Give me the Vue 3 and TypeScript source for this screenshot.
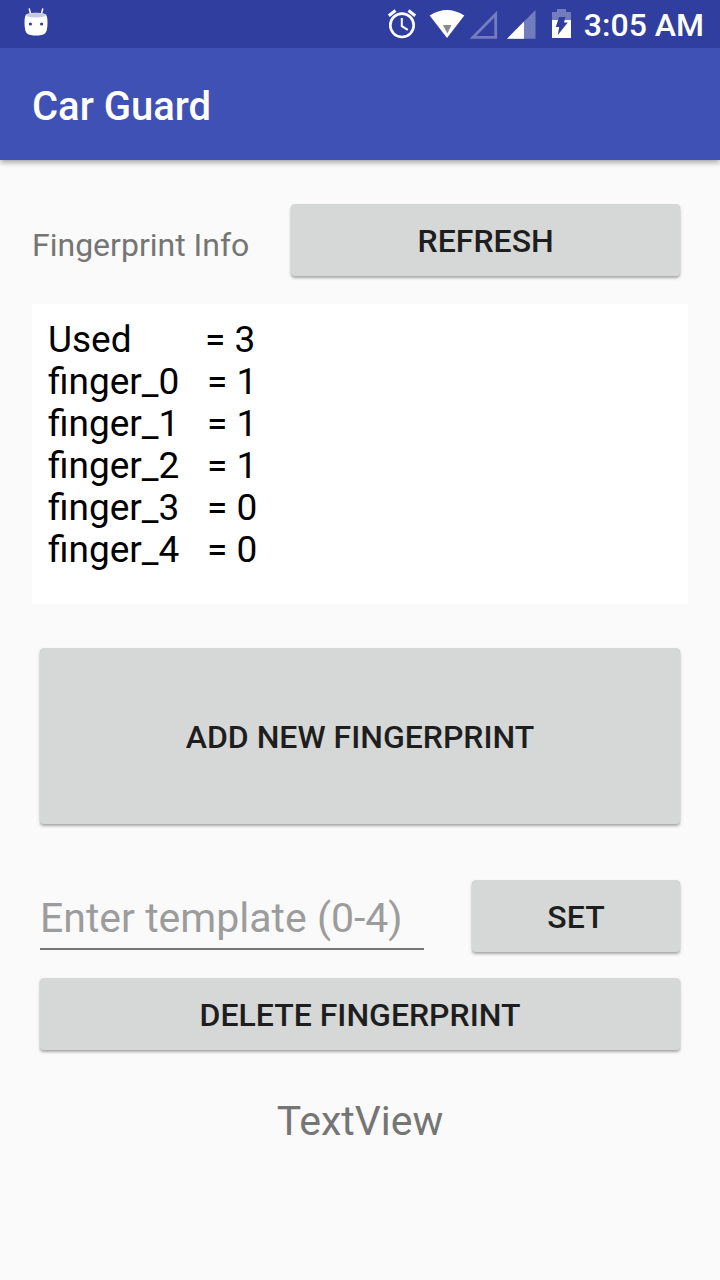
<script setup lang="ts">
import { computed, ref } from 'vue'

const used = ref(3)
const fingers = ref<number[]>([1, 1, 1, 0, 0])
const template = ref('')
const info = computed(() =>
  [`Used        = ${used.value}`, ...fingers.value.map((v, i) => `finger_${i}   = ${v}`)].join('\n'),
)
</script>

<template>
  <div class="screen">
    <div class="status">
      <svg class="robot" width="24" height="28" viewBox="0 0 24 28" aria-hidden="true">
        <path d="M5.300 1 6.600 6M18.700 1 17.400 6" fill="none" stroke="#fff" stroke-width="1.500" stroke-linecap="round" />
        <path d="M3 6Q12 3.500 21 6 23.500 6.500 23.500 14.500 23.500 23 21 25.500 18 27.500 12 27.500 6 27.500 3 25.500.5 23 .5 14.500.5 6.500 3 6Z" fill="#fff" />
        <path d="M2 7Q3 5 12 5T22 7Q21 9.500 12 9.500T2 7Z" fill="#c5cae9" />
        <circle cx="6.400" cy="16" r="1.600" fill="#303f9f" />
        <circle cx="17.600" cy="16" r="1.600" fill="#303f9f" />
      </svg>
      <svg class="icons" width="192" height="32" viewBox="384 8 192 32" aria-hidden="true">
        <g fill="none" stroke="#fff">
          <circle cx="402" cy="25.300" r="11.700" stroke-width="2.600" />
          <path d="M401.800 18v8.200l6 3.700" stroke-width="2" />
          <path d="M388.800 15.800l6.700-5.300M415.200 15.800l-6.700-5.300" stroke-width="3" />
        </g>
        <path d="M429.700 15.600Q447 4.500 464.300 15.600L447 38Z" fill="#fff" />
        <path d="M443 25h8.500L447.300 33.500Z" fill="#8a8a8a" />
        <path d="M473 37.300 495.700 14.200V37.300Z" fill="none" stroke="#737cbe" stroke-width="2.800" />
        <path d="M507 38.700 535.500 10V38.700Z" fill="#737cbe" />
        <path d="M507 38.700 524 21.600V38.700Z" fill="#fff" />
        <path d="M552 20v-8h5V9h9v3h5v8Z" fill="#737cbe" />
        <path d="M552 20h19v18h-19Z" fill="#fff" />
        <path d="M559 17h6.500l-1.500 5.500h3.800L557.800 35l1.400-8h-3.400Z" fill="#303f9f" />
      </svg>
      <time class="clock">3:05 AM</time>
    </div>

    <header class="bar"><h1>Car Guard</h1></header>

    <main class="content">
      <section class="info-row">
        <h2>Fingerprint Info</h2>
        <button type="button" class="btn refresh">REFRESH</button>
      </section>
      <pre class="info">{{ info }}</pre>
      <button type="button" class="btn add">ADD NEW FINGERPRINT</button>
      <form class="set-row" @submit.prevent>
        <input v-model="template" type="text" inputmode="numeric" aria-label="Enter template (0-4)" placeholder="Enter template (0-4)" />
        <button type="submit" class="btn set">SET</button>
      </form>
      <button type="button" class="btn delete">DELETE FINGERPRINT</button>
      <p class="result">TextView</p>
    </main>
  </div>
</template>

<style>
body {
  background: #fafafa;
}
</style>

<style scoped>
.screen {
  min-height: 100vh;
  background: #fafafa;
  font-family: Roboto, "Noto Sans", sans-serif;
}
.status {
  display: flex;
  align-items: center;
  height: 48px;
  padding: 0 16px 0 24px;
  box-sizing: border-box;
  background: #303f9f;
  color: #fff;
}
.robot {
  margin-bottom: 4px;
}
.icons {
  margin-left: auto;
}
.clock {
  margin-left: 8px;
  padding-top: 2px;
  font-size: 32px;
  line-height: 48px;
  font-weight: 500;
}
.bar {
  display: flex;
  align-items: center;
  height: 112px;
  padding: 6px 32px 0;
  box-sizing: border-box;
  background: #3f51b5;
  color: #fff;
  box-shadow: 0 2px 6px rgba(0, 0, 0, 0.4);
  clip-path: inset(0 0 -12px 0);
}
h1 {
  margin: 0;
  font-size: 40px;
  line-height: 48px;
  font-weight: 500;
}
.content {
  display: flex;
  flex-direction: column;
  padding: 44px 32px;
}
.btn {
  height: 72px;
  margin: 0 8px;
  padding: 2px 0 0;
  border: 0;
  border-radius: 4px;
  background: #d6d7d7;
  box-shadow: 0 2px 3px rgba(0, 0, 0, 0.34);
  color: #1e1e1e;
  font-family: inherit;
  font-size: 32px;
  font-weight: 500;
  line-height: 40px;
}
.info-row {
  display: flex;
  align-items: center;
  gap: 34px;
}
h2 {
  margin: 0;
  padding-top: 10px;
  color: #757575;
  font-size: 32px;
  line-height: 40px;
  font-weight: 400;
}
.refresh {
  flex: 1;
}
.info {
  min-height: 300px;
  margin: 28px 0 44px;
  padding: 15px 16px;
  box-sizing: border-box;
  background: #fff;
  color: #000;
  font-family: inherit;
  font-size: 37px;
  line-height: 42px;
}
.add {
  height: 176px;
}
.set-row {
  display: flex;
  align-items: flex-start;
  gap: 40px;
  margin: 56px 0 26px;
}
input {
  flex: 1;
  min-width: 0;
  height: 70px;
  margin-left: 8px;
  padding: 8px 0 0;
  box-sizing: border-box;
  border: 0;
  border-bottom: 2px solid #757575;
  outline: 0;
  background: transparent;
  color: #212121;
  font-family: inherit;
  font-size: 41px;
}
input::placeholder {
  color: #9c9c9c;
  opacity: 1;
}
.set {
  flex: 0 0 208px;
}
.result {
  margin: 47px 0 0;
  color: #757575;
  font-size: 41px;
  line-height: 48px;
  text-align: center;
}
</style>
